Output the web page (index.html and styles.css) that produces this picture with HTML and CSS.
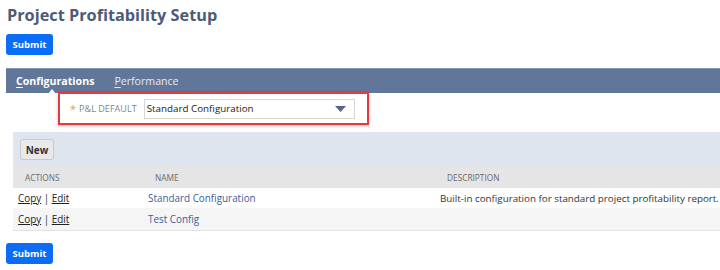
FILE: index.html
```html
<!DOCTYPE html>
<html>
<head>
<meta charset="utf-8">
<link rel="stylesheet" href="styles.css">
</head>
<body>
<div class="page">
  <h1 class="title">Project Profitability Setup</h1>
  <button class="btn-primary">Submit</button>

  <div class="tabbar">
    <span class="tab tab-active"><u>C</u>onfigurations</span>
    <span class="tab"><u>P</u>erformance</span>
    <span class="notch"></span>
  </div>

  <div class="field-box">
    <span class="req">*</span>
    <span class="field-label">P&amp;L DEFAULT</span>
    <div class="select">
      <span>Standard Configuration</span>
      <svg class="caret" width="11" height="6" viewBox="0 0 11 6"><polygon points="0,0 11,0 5.5,6" fill="#52658a"/></svg>
    </div>
  </div>

  <div class="panel">
    <div class="panel-bar">
      <button class="btn-secondary">New</button>
    </div>
    <table class="grid">
      <thead>
        <tr><th class="c1">ACTIONS</th><th class="c2">NAME</th><th class="c3">DESCRIPTION</th></tr>
      </thead>
      <tbody>
        <tr class="row">
          <td><a class="act">Copy</a> | <a class="act">Edit</a></td>
          <td><a class="name">Standard Configuration</a></td>
          <td class="desc">Built-in configuration for standard project profitability report.</td>
        </tr>
        <tr class="row alt">
          <td><a class="act">Copy</a> | <a class="act">Edit</a></td>
          <td><a class="name">Test Config</a></td>
          <td></td>
        </tr>
      </tbody>
    </table>
  </div>

  <button class="btn-primary bottom">Submit</button>
</div>
</body>
</html>
```

FILE: styles.css
```css
html, body {
  margin: 0;
  padding: 0;
  background: #fff;
  overflow: hidden;
}
body {
  font-family: "Open Sans", "Noto Sans", sans-serif;
  width: 720px;
  height: 270px;
}
.page {
  padding: 3px 0 0 6px;
  width: 714px;
}
.title {
  margin: 0 0 7px 1px;
  font-size: 16.3px;
  line-height: 24px;
  font-weight: 700;
  color: #4d5b75;
}
.btn-primary {
  display: block;
  height: 21px;
  width: 47px;
  padding: 0;
  border: none;
  border-radius: 3px;
  background: #0b6cf5;
  color: #fff;
  font-family: inherit;
  font-size: 9.5px;
  font-weight: 700;
  line-height: 21px;
}
.tabbar {
  position: relative;
  margin-top: 13px;
  height: 25px;
  background: #607799;
  border-top: 1px solid #8397b3;
  box-sizing: border-box;
  display: flex;
  align-items: center;
  padding-left: 10px;
  gap: 20px;
}
.tab {
  font-size: 10.6px;
  color: #e6ebf2;
}
.tab-active {
  font-weight: 700;
  color: #fff;
}
.tab u {
  text-underline-offset: 2px;
}
.notch {
  position: absolute;
  left: 42px;
  bottom: -1px;
  width: 0;
  height: 0;
  border-left: 4px solid transparent;
  border-right: 4px solid transparent;
  border-bottom: 5px solid #fff;
}
.field-box {
  position: relative;
  margin-top: -1px;
  margin-left: 52px;
  width: 297px;
  height: 29px;
  border: 2px solid #e8393f;
  box-shadow: 0 1px 3px rgba(0,0,0,0.25);
  display: flex;
  align-items: center;
  padding-left: 10px;
  box-sizing: content-box;
}
.req {
  color: #e3a327;
  font-size: 11px;
  margin-right: 3px;
}
.field-label {
  font-size: 9.1px;
  color: #7d8796;
}
.select {
  margin-left: 7px;
  width: 199px;
  height: 18px;
  border: 1px solid #d6d6d6;
  display: flex;
  align-items: center;
  justify-content: space-between;
  padding: 0 8px 0 2px;
  box-sizing: content-box;
  font-size: 9.8px;
  color: #222;
}
.caret {
  display: block;
}
.panel {
  margin-top: 7px;
  margin-left: 7px;
  border-bottom: 1px solid #e2e2e2;
}
.panel-bar {
  background: #dfe5ee;
  height: 34px;
  padding: 7px 0 0 7px;
  box-sizing: border-box;
}
.btn-secondary {
  display: block;
  width: 34px;
  height: 21px;
  padding: 0;
  border: 1px solid #c9c9c9;
  border-radius: 3px;
  background: #e9e9e9;
  color: #333;
  font-family: inherit;
  font-size: 10px;
  font-weight: 700;
}
.grid {
  width: 100%;
  border-collapse: collapse;
  font-size: 9.9px;
  color: #333;
}
.grid th {
  background: #e5e5e5;
  height: 22px;
  padding: 0 0 0 12px;
  text-align: left;
  font-weight: 400;
  font-size: 8.3px;
  color: #6b6b6b;
}
.grid th.c1 { width: 118px; }
.grid th.c2 { width: 280px; }
.grid td {
  height: 20px;
  padding: 0 0 0 5px;
  white-space: nowrap;
}
.grid td.desc {
  font-size: 9.8px;
}
.row.alt td {
  background: #f5f5f5;
  height: 22px;
}
.act {
  color: #222;
  text-decoration: underline;
}
.name {
  color: #3b5e97;
}
.btn-primary.bottom {
  margin-top: 12px;
}
```
